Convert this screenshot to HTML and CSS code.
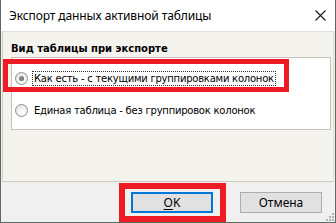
FILE: index.html
```html
<!DOCTYPE html>
<html lang="ru">
<head>
<meta charset="utf-8">
<title>Экспорт данных активной таблицы</title>
<link rel="stylesheet" href="styles.css">
</head>
<body>
<div class="window">
  <div class="titlebar">
    <span class="title">Экспорт данных активной таблицы</span>
    <svg class="close" width="11" height="11" viewBox="0 0 11 11"><path d="M0.5 0.5 L10.5 10.5 M10.5 0.5 L0.5 10.5" stroke="#1a1a1a" stroke-width="1.1" fill="none"/></svg>
  </div>
  <div class="body">
    <div class="panel">
      <div class="group-title">Вид таблицы при экспорте</div>
      <div class="group">
        <div class="opt"><span class="radio checked"></span><span class="lbl focus">Как есть - с текущими группировками колонок</span></div>
        <div class="opt"><span class="radio"></span><span class="lbl">Единая таблица - без группировок колонок</span></div>
      </div>
    </div>
    <div class="buttons">
      <button class="btn default"><u>O</u>K</button>
      <button class="btn">Отмена</button>
      <svg class="grip" width="9" height="9" viewBox="0 0 9 9">
        <rect x="7" y="1" width="2" height="2" fill="#b5b5b5"/>
        <rect x="4" y="4" width="2" height="2" fill="#b5b5b5"/>
        <rect x="7" y="4" width="2" height="2" fill="#b5b5b5"/>
        <rect x="1" y="7" width="2" height="2" fill="#b5b5b5"/>
        <rect x="4" y="7" width="2" height="2" fill="#b5b5b5"/>
        <rect x="7" y="7" width="2" height="2" fill="#b5b5b5"/>
      </svg>
    </div>
  </div>
  <div class="mark mark1"></div>
  <div class="mark mark2"></div>
</div>
</body>
</html>
```
FILE: styles.css
```css
html, body {
  margin: 0;
  padding: 0;
  background: #f0f0f0;
}
.window {
  position: relative;
  width: 336px;
  height: 223px;
  box-sizing: border-box;
  border-left: 1px solid #5d6a62;
  border-right: 1px solid #5d6a62;
  border-bottom: 1px solid #5d6a62;
  background: #f0f0f0;
  display: flex;
  flex-direction: column;
  overflow: hidden;
}
.titlebar {
  height: 31px;
  flex: none;
  background: #ffffff;
  display: flex;
  align-items: center;
  justify-content: space-between;
  padding: 0 9px 0 8px;
}
.title {
  font-family: "Noto Sans", "Open Sans", sans-serif;
  font-size: 12px;
  letter-spacing: -0.1px;
  color: #000;
}
.close {
  display: block;
}
.body {
  flex: 1;
  display: flex;
  flex-direction: column;
}
.panel {
  height: 151px;
  box-sizing: border-box;
  margin: 0 1px;
  background: #f4f3ee;
  border: 1px solid #e2dfd6;
  border-left-color: #d3cfc3;
  border-bottom-color: #cfcabb;
  display: flex;
  flex-direction: column;
}
.group-title {
  font-family: "DejaVu Sans", sans-serif;
  font-weight: bold;
  font-size: 10px;
  color: #000;
  padding: 11px 0 0 8px;
  height: 24px;
  box-sizing: border-box;
}
.group {
  margin: 1px 2px 0 8px;
  height: 73px;
  box-sizing: border-box;
  background: #ffffff;
  border: 1px solid #c9c0bc;
  padding: 10px 0 0 3px;
  display: flex;
  flex-direction: column;
  gap: 12px;
}
.opt {
  height: 20px;
  display: flex;
  align-items: center;
}
.radio {
  width: 13px;
  height: 13px;
  box-sizing: border-box;
  border-radius: 50%;
  border: 1px solid #8e8f8f;
  background: radial-gradient(circle at 60% 65%, #ffffff 0, #f2f2f2 40%, #dcdcd8 100%);
  margin-right: 4px;
  position: relative;
  flex: none;
}
.radio.checked::after {
  content: "";
  position: absolute;
  left: 3px;
  top: 3px;
  width: 5px;
  height: 5px;
  border-radius: 50%;
  background: radial-gradient(circle at 40% 40%, #9a9a9a 0, #555 100%);
}
.lbl {
  font-family: "DejaVu Sans", sans-serif;
  font-size: 10px;
  letter-spacing: -0.23px;
  color: #000;
  padding: 1px 1px;
  border: 1px solid transparent;
  line-height: 11px;
}
.lbl.focus {
  border: 1px dotted #333;
}
.buttons {
  position: relative;
  flex: 1;
  display: flex;
  justify-content: flex-end;
  align-items: flex-start;
  padding: 10px 13px 0 0;
  gap: 27px;
}
.btn {
  width: 82px;
  height: 21px;
  box-sizing: border-box;
  margin: 0;
  padding: 0;
  background: #e1e1e1;
  border: 1px solid #adadad;
  font-family: "Noto Sans", "Open Sans", sans-serif;
  font-size: 12px;
  color: #000;
  line-height: 17px;
}
.btn.default {
  border: 2px solid #0078d7;
}
.btn u {
  text-decoration: underline;
  text-underline-offset: 2px;
}
.grip {
  position: absolute;
  right: 1px;
  bottom: 1px;
}
.mark {
  position: absolute;
  box-sizing: border-box;
  border: 5px solid #ed1c24;
  pointer-events: none;
}
.mark1 {
  left: 2px;
  top: 59px;
  width: 286px;
  height: 33px;
}
.mark2 {
  left: 118px;
  top: 183px;
  width: 107px;
  height: 39px;
  border-width: 6px;
}
```
